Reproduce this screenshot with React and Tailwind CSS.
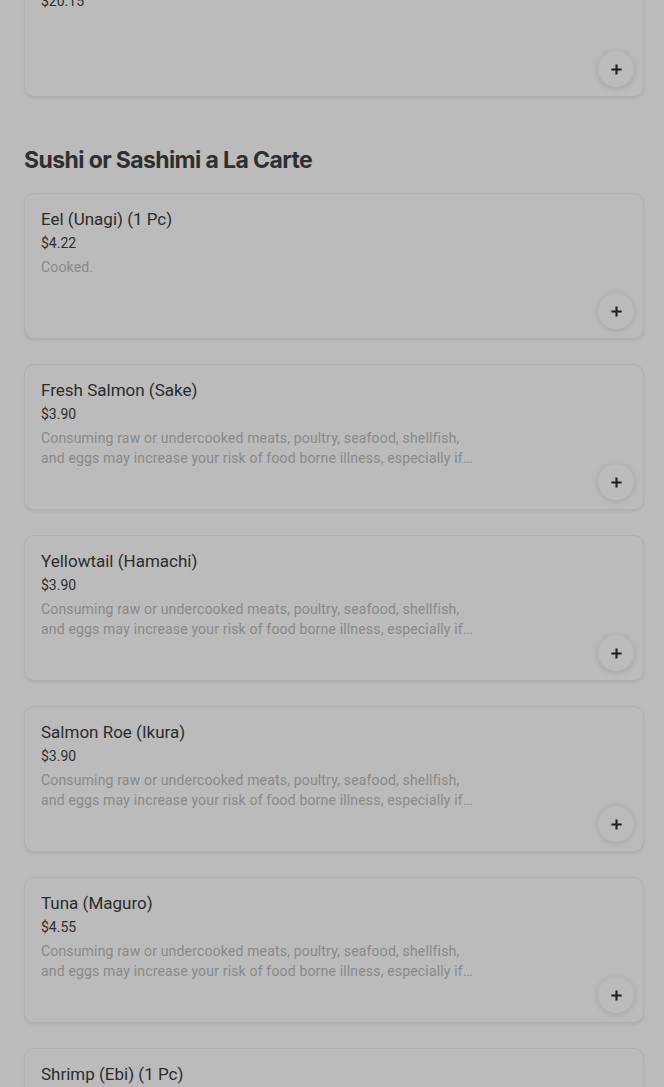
import React from "react";

const aviso =
  "Consuming raw or undercooked meats, poultry, seafood, shellfish, and eggs may increase your risk of food borne illness, especially if you have certain medical conditions.";

const platos = [
  { nombre: "Eel (Unagi) (1 Pc)", precio: "$4.22", desc: "Cooked." },
  { nombre: "Fresh Salmon (Sake)", precio: "$3.90", desc: aviso },
  { nombre: "Yellowtail (Hamachi)", precio: "$3.90", desc: aviso },
  { nombre: "Salmon Roe (Ikura)", precio: "$3.90", desc: aviso },
  { nombre: "Tuna (Maguro)", precio: "$4.55", desc: aviso },
  { nombre: "Shrimp (Ebi) (1 Pc)", precio: "$3.25", desc: "Cooked." },
];

const Plus = () => (
  <svg width="13" height="13" viewBox="0 0 14 14" fill="none">
    <path d="M7 1.5v11M1.5 7h11" stroke="#1f1f1f" strokeWidth="2.3" />
  </svg>
);

const Tarjeta = ({ nombre, precio, desc, className = "" }) => (
  <div
    className={`relative h-[146px] rounded-[10px] border border-[#b0b0b0] bg-[#bbbbbb] shadow-[0_2px_3px_rgba(0,0,0,0.06)] px-4 pt-[13px] ${className}`}
  >
    <div className="text-[17px] leading-6 text-[#2b2b2b]">{nombre}</div>
    <div className="text-sm leading-5 mt-[2px] text-[#2e2e2e]">{precio}</div>
    {desc && (
      <div className="text-sm leading-5 mt-[4px] tracking-[0.17px] text-[#898989] w-[434px] line-clamp-2">
        {desc}
      </div>
    )}
    <button className="absolute right-[9px] bottom-[9px] w-9 h-9 rounded-full bg-[#bbbbbb] shadow-[0_1px_6px_rgba(0,0,0,0.12)] flex items-center justify-center">
      <Plus />
    </button>
  </div>
);

export default function App() {
  return (
    <div
      className="min-h-screen bg-[#bbbbbb] pl-6 pr-5 overflow-hidden"
      style={{ fontFamily: "Roboto, 'Liberation Sans', sans-serif" }}
    >
      <Tarjeta
        nombre="Chef's Special Combo"
        precio="$20.15"
        className="-mt-[49px]"
      />
      <h2
        className="mt-[47px] mb-[17px] text-[23px] leading-8 font-bold tracking-[-0.6px] text-[#2f2f2f]"
        style={{ fontFamily: "Inter, 'Liberation Sans', sans-serif" }}
      >
        Sushi or Sashimi a La Carte
      </h2>
      <div className="flex flex-col gap-[25px]">
        {platos.map((p) => (
          <Tarjeta key={p.nombre} {...p} />
        ))}
      </div>
    </div>
  );
}
